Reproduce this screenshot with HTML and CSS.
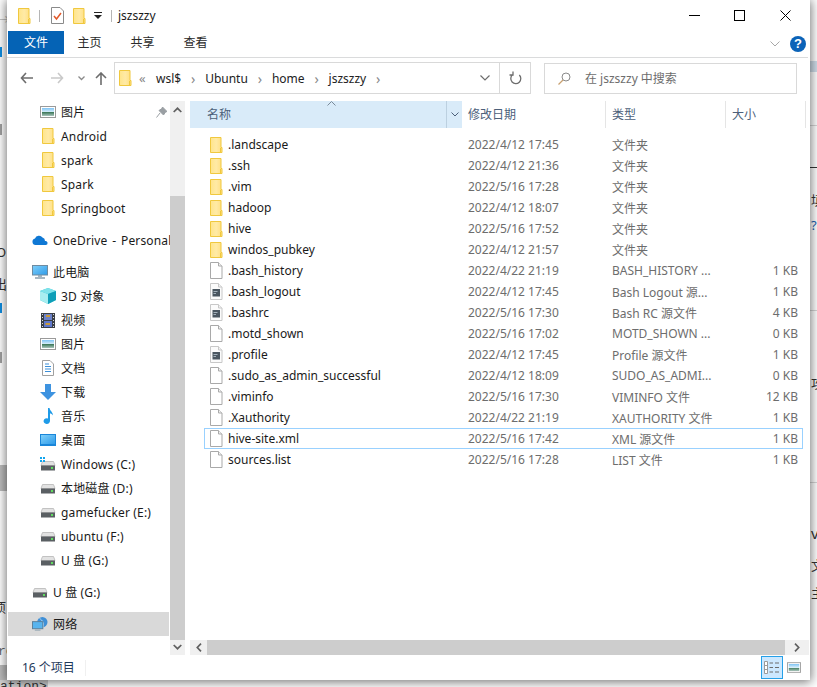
FILE: index.html
```html
<!DOCTYPE html>
<html lang="zh">
<head>
<meta charset="utf-8">
<title>jszszzy</title>
<link rel="stylesheet" href="styles.css">
</head>
<body>
<svg class="defs" width="0" height="0" aria-hidden="true">
  <defs>
    <linearGradient id="fg" x1="0" x2="1" y1="0" y2="0"><stop offset="0" stop-color="#ffe58a"/><stop offset=".5" stop-color="#ffeaa6"/><stop offset="1" stop-color="#ffdf80"/></linearGradient>
    <linearGradient id="sky" x1="0" x2="0" y1="0" y2="1"><stop offset="0" stop-color="#7fc4f5"/><stop offset=".5" stop-color="#d8edf8"/><stop offset=".55" stop-color="#3f7a5c"/><stop offset="1" stop-color="#a9c4bc"/></linearGradient>
    <linearGradient id="scr" x1="0" x2="1" y1="0" y2="1"><stop offset="0" stop-color="#7fd0fb"/><stop offset="1" stop-color="#2f9be8"/></linearGradient>
    <symbol id="folder" viewBox="0 0 13 16"><path d="M.5.5H11V10.500H12V15.500H.5Z" fill="url(#fg)" stroke="#f0c83e"/><path d="M10.500 11V15" stroke="#f0c83e" fill="none"/></symbol>
    <symbol id="file" viewBox="0 0 13 17"><path d="M.5.5H8.500L12 4V16.500H.5Z" fill="#fff" stroke="#a9a9a9"/><path d="M8.500.5V4H12" fill="#f1f1f1" stroke="#a9a9a9"/></symbol>
    <symbol id="script" viewBox="0 0 13 17"><path d="M.5.5H8.500L12 4V16.500H.5Z" fill="#fbfbfb" stroke="#c8c8c8"/><path d="M8.500.5V4H12" fill="#f1f1f1" stroke="#c8c8c8"/><rect x="2.500" y="6" width="7.500" height="7.500" fill="#4a5660"/><path d="M3.500 8.500H7.500M3.500 10.500H6" stroke="#a3b0ba"/></symbol>
    <symbol id="pic" viewBox="0 0 16 12"><rect x=".5" y=".5" width="15" height="11" fill="#fff" stroke="#9a9a9a"/><rect x="2" y="2" width="12" height="8" fill="url(#sky)"/></symbol>
    <symbol id="drive" viewBox="0 0 16 12"><path d="M2.500 2.500H13.500L15 6.500H1Z" fill="#e2e2e2" stroke="#c2c2c2"/><rect x="1" y="6.500" width="14" height="5" fill="#5a5f63"/><rect x="11" y="8" width="2" height="2" fill="#5fdc5f"/></symbol>
  </defs>
</svg>

<div class="backdrop">
  <span class="bit arrow">→</span>
  <span class="bit blue b1"></span>
  <span class="bit gray g1"></span>
  <span class="bit glyph o">O</span>
  <span class="bit glyph chu">出</span>
  <span class="bit blue b2"></span>
  <span class="bit gray g2"></span>
  <span class="bit block k1"></span>
  <span class="bit glyph xiang">项</span>
  <span class="bit glyph re">re</span>
  <span class="bit block k2"></span>
  <span class="bit tail">ation&gt;</span>
  <span class="bit rband"></span>
  <span class="bit rule r1"></span>
  <span class="bit rule r2"></span>
  <span class="bit rule r3"></span>
  <span class="bit rule r4"></span>
  <span class="bit glyph tian">填</span>
  <span class="bit glyph q">?</span>
  <span class="bit glyph gong">攻</span>
  <span class="bit glyph vi">vi</span>
  <span class="bit glyph wen">文</span>
  <span class="bit glyph zhu">主</span>
</div>

<main class="window">
  <header class="titlebar">
    <svg class="qa-folder" width="13" height="16"><use href="#folder"/></svg>
    <span class="qa-sep"></span>
    <svg class="qa-check" width="13" height="17" viewBox="0 0 13 17"><path d="M.5.5H9L12.500 4V16.500H.5Z" fill="#fff" stroke="#8a8a8a"/><path d="M3 9L5.500 12L10 6" fill="none" stroke="#e2592a" stroke-width="1.500"/></svg>
    <svg class="qa-folder2" width="13" height="16"><use href="#folder"/></svg>
    <svg class="qa-drop" width="8" height="7" viewBox="0 0 8 7"><path d="M0 0H8V1H0ZM0 3H8L4 7Z" fill="#222"/></svg>
    <span class="qa-sep sep2"></span>
    <span class="title">jszszzy</span>
    <svg class="ctl min" width="11" height="11" viewBox="0 0 11 11"><path d="M0 5.500H11" stroke="#000"/></svg>
    <svg class="ctl max" width="11" height="11" viewBox="0 0 11 11"><rect x=".5" y=".5" width="10" height="10" fill="none" stroke="#000"/></svg>
    <svg class="ctl cls" width="11" height="11" viewBox="0 0 11 11"><path d="M.5.5L10.500 10.500M10.500.5L.5 10.500" stroke="#000"/></svg>
  </header>

  <nav class="ribbon">
    <span class="tab tab-file">文件</span>
    <span class="tab tab-home">主页</span>
    <span class="tab">共享</span>
    <span class="tab">查看</span>
    <svg class="rb-chev" width="10" height="6" viewBox="0 0 10 6"><path d="M.5.5L5 5L9.500.5" fill="none" stroke="#a8a8a8"/></svg>
    <span class="help">?</span>
  </nav>

  <section class="toolbar">
    <svg class="tb back" width="13" height="12" viewBox="0 0 13 12"><path d="M6 1L1.500 6L6 11M2 6H13" fill="none" stroke="#6d6d6d" stroke-width="1.600"/></svg>
    <svg class="tb fwd" width="13" height="12" viewBox="0 0 13 12"><path d="M7 1L11.500 6L7 11M0 6H11" fill="none" stroke="#c9c9c9" stroke-width="1.600"/></svg>
    <svg class="tb dn" width="7" height="5" viewBox="0 0 7 5"><path d="M.5.5L3.500 3.500L6.500.5" fill="none" stroke="#8a8a8a" stroke-width="1.300"/></svg>
    <svg class="tb up" width="12" height="13" viewBox="0 0 12 13"><path d="M1 6L6 1L11 6M6 1.500V13" fill="none" stroke="#6d6d6d" stroke-width="1.600"/></svg>
    <div class="address">
      <svg class="ad-folder" width="13" height="16"><use href="#folder"/></svg>
      <span class="crumb-more">«</span>
      <span class="crumb c-wsl">wsl$</span><span class="crumb-sep">›</span>
      <span class="crumb">Ubuntu</span><span class="crumb-sep">›</span>
      <span class="crumb">home</span><span class="crumb-sep">›</span>
      <span class="crumb">jszszzy</span><span class="crumb-sep">›</span>
      <svg class="ad-chev" width="10" height="6" viewBox="0 0 10 6"><path d="M.5.5L5 5L9.500.5" fill="none" stroke="#6d6d6d" stroke-width="1.200"/></svg>
      <span class="refresh"><svg width="13" height="14" viewBox="0 0 13 14"><path d="M9.800 3.500A5 5 0 1 1 3 3.300M3.500 0V3.500H0" transform="translate(.5 .5)" fill="none" stroke="#6d6d6d" stroke-width="1.300"/></svg></span>
    </div>
    <div class="search">
      <svg width="13" height="13" viewBox="0 0 13 13"><circle cx="8" cy="5" r="4" fill="none" stroke="#8a8a8a"/><path d="M5 8L.5 12.500" stroke="#c8a070" stroke-width="1.200"/></svg>
      <span>在 jszszzy 中搜索</span>
    </div>
  </section>

  <div class="body">
    <aside class="sidebar">
      <ul class="tree">
        <li class="node sub"><svg class="ic" width="16" height="12"><use href="#pic"/></svg>图片
          <svg class="pin" width="11" height="11" viewBox="0 0 11 11"><path d="M6.500 0L11 4.500L9.500 5L7.500 8L3 3.500L6 1.500ZM4 6L.5 10.500" fill="#9a9fa3" stroke="#9a9fa3"/></svg></li>
        <li class="node sub"><svg class="ic" width="13" height="16"><use href="#folder"/></svg>Android</li>
        <li class="node sub"><svg class="ic" width="13" height="16"><use href="#folder"/></svg>spark</li>
        <li class="node sub"><svg class="ic" width="13" height="16"><use href="#folder"/></svg>Spark</li>
        <li class="node sub"><svg class="ic" width="13" height="16"><use href="#folder"/></svg>Springboot</li>
      </ul>
      <ul class="tree">
        <li class="node top"><svg class="ic" width="16" height="10" viewBox="0 0 16 10"><path d="M3.500 10A3.300 3.300 0 0 1 3 3.500A4.300 4.300 0 0 1 10.500 2.500A3.500 3.500 0 0 1 13 6A1.900 1.900 0 0 1 14 10Z" fill="#0f78d4"/></svg><span class="clip">OneDrive - Personal</span></li>
      </ul>
      <ul class="tree">
        <li class="node top"><svg class="ic" width="16" height="14" viewBox="0 0 16 14"><rect x=".5" y=".5" width="15" height="9.500" fill="url(#scr)" stroke="#6f8ba0"/><path d="M6 11H10M3 13H13" stroke="#8aa0ae" stroke-width="1.300"/></svg>此电脑</li>
        <li class="node sub"><svg class="ic" width="16" height="16" viewBox="0 0 16 16"><path d="M8 0L16 3V12L8 16L0 12V3Z" fill="#37c6d6"/><path d="M0 3L8 6V16L0 12Z" fill="#a8eef0"/><path d="M8 0L16 3L8 6L0 3Z" fill="#7fe3ea"/><path d="M8 6L16 3V12L8 16Z" fill="#0f9fb8"/></svg>3D 对象</li>
        <li class="node sub"><svg class="ic" width="14" height="15" viewBox="0 0 14 15"><rect width="14" height="15" fill="#3a3f45"/><rect x="3" y="1" width="8" height="6" fill="#6d83c9"/><rect x="3" y="8" width="8" height="6" fill="#5f78cc"/><path d="M5 3H9M4.500 11H9" stroke="#c99a3a" stroke-width="2"/><path d="M1 1.500H2M1 4.500H2M1 7.500H2M1 10.500H2M1 13.500H2M12 1.500H13M12 4.500H13M12 7.500H13M12 10.500H13M12 13.500H13" stroke="#ddd"/></svg>视频</li>
        <li class="node sub"><svg class="ic" width="16" height="12"><use href="#pic"/></svg>图片</li>
        <li class="node sub"><svg class="ic" width="12" height="16" viewBox="0 0 12 16"><path d="M.5.5H8L11.500 4V15.500H.5Z" fill="#fff" stroke="#a0a0a0"/><path d="M3 4H7M3 6.500H9M3 9H9M3 11.500H9" stroke="#3c8fd8"/></svg>文档</li>
        <li class="node sub"><svg class="ic" width="16" height="16" viewBox="0 0 16 16"><path d="M5 0H11V8H16L8 16L0 8H5Z" fill="#3e93e0"/></svg>下载</li>
        <li class="node sub"><svg class="ic" width="12" height="16" viewBox="0 0 12 16"><path d="M6 0H7.500C8 3 11 4 11 7.500C10 6 9 5.500 8 5.500V13A3.200 2.800 0 1 1 6 10.500Z" fill="#1f9be8"/></svg>音乐</li>
        <li class="node sub"><svg class="ic" width="16" height="12" viewBox="0 0 16 12"><rect width="16" height="12" fill="#1a86d9"/><rect x="1" y="1" width="14" height="9" fill="url(#scr)"/></svg>桌面</li>
        <li class="node sub"><svg class="ic" width="16" height="14" viewBox="0 0 16 14"><use href="#drive" y="2" height="12" width="16"/><path d="M0 0H2V2H0ZM3 0H5V2H3ZM0 3H2V5H0ZM3 3H5V5H3Z" fill="#12a5ee"/></svg>Windows (C:)</li>
        <li class="node sub"><svg class="ic" width="16" height="12"><use href="#drive"/></svg>本地磁盘 (D:)</li>
        <li class="node sub"><svg class="ic" width="16" height="12"><use href="#drive"/></svg>gamefucker (E:)</li>
        <li class="node sub"><svg class="ic" width="16" height="12"><use href="#drive"/></svg>ubuntu (F:)</li>
        <li class="node sub"><svg class="ic" width="16" height="12"><use href="#drive"/></svg>U 盘 (G:)</li>
      </ul>
      <ul class="tree">
        <li class="node top"><svg class="ic" width="16" height="12"><use href="#drive"/></svg>U 盘 (G:)</li>
      </ul>
      <ul class="tree">
        <li class="node top active"><svg class="ic" width="16" height="16" viewBox="0 0 17 16"><circle cx="11" cy="6" r="5.500" fill="#3f8fd6"/><path d="M8 2C11 4 13 7 12 11" stroke="#bfe0f5" fill="none"/><rect x=".5" y="5.500" width="11" height="7.500" fill="#58b4ee" stroke="#5b7f99"/><path d="M3 14.500H9" stroke="#8aa0ae"/></svg>网络</li>
      </ul>
    </aside>

    <div class="vscroll">
      <svg class="sb-up" width="9" height="6" viewBox="0 0 9 6"><path d="M.7 5L4.500 1.300L8.300 5" fill="none" stroke="#606060" stroke-width="1.700"/></svg>
      <span class="vthumb"></span>
      <svg class="sb-dn" width="9" height="6" viewBox="0 0 9 6"><path d="M.7 1L4.500 4.700L8.300 1" fill="none" stroke="#606060" stroke-width="1.700"/></svg>
    </div>

    <section class="pane">
      <div class="headers">
        <div class="hd hd-name">
          <span>名称</span>
          <svg class="sort" width="9" height="5" viewBox="0 0 9 5"><path d="M.5 4.500L4.500.5L8.500 4.500" fill="none" stroke="#7a8a99"/></svg>
          <span class="hd-drop"><svg width="8" height="5" viewBox="0 0 8 5"><path d="M.5.5L4 4L7.500.5" fill="none" stroke="#4c607a"/></svg></span>
        </div>
        <div class="hd hd-date">修改日期</div>
        <div class="hd hd-type">类型</div>
        <div class="hd hd-size">大小</div>
      </div>
      <div class="rows">
        <div class="row"><span class="name"><svg width="13" height="16"><use href="#folder"/></svg>.landscape</span><span class="cell">2022/4/12 17:45</span><span class="cell">文件夹</span><span class="size"></span></div>
        <div class="row"><span class="name"><svg width="13" height="16"><use href="#folder"/></svg>.ssh</span><span class="cell">2022/4/12 21:36</span><span class="cell">文件夹</span><span class="size"></span></div>
        <div class="row"><span class="name"><svg width="13" height="16"><use href="#folder"/></svg>.vim</span><span class="cell">2022/5/16 17:28</span><span class="cell">文件夹</span><span class="size"></span></div>
        <div class="row"><span class="name"><svg width="13" height="16"><use href="#folder"/></svg>hadoop</span><span class="cell">2022/4/12 18:07</span><span class="cell">文件夹</span><span class="size"></span></div>
        <div class="row"><span class="name"><svg width="13" height="16"><use href="#folder"/></svg>hive</span><span class="cell">2022/5/16 17:52</span><span class="cell">文件夹</span><span class="size"></span></div>
        <div class="row"><span class="name"><svg width="13" height="16"><use href="#folder"/></svg>windos_pubkey</span><span class="cell">2022/4/12 21:57</span><span class="cell">文件夹</span><span class="size"></span></div>
        <div class="row"><span class="name"><svg width="13" height="17"><use href="#file"/></svg>.bash_history</span><span class="cell">2022/4/22 21:19</span><span class="cell">BASH_HISTORY ...</span><span class="size">1 KB</span></div>
        <div class="row"><span class="name"><svg width="13" height="17"><use href="#script"/></svg>.bash_logout</span><span class="cell">2022/4/12 17:45</span><span class="cell">Bash Logout 源...</span><span class="size">1 KB</span></div>
        <div class="row"><span class="name"><svg width="13" height="17"><use href="#script"/></svg>.bashrc</span><span class="cell">2022/5/16 17:30</span><span class="cell">Bash RC 源文件</span><span class="size">4 KB</span></div>
        <div class="row"><span class="name"><svg width="13" height="17"><use href="#file"/></svg>.motd_shown</span><span class="cell">2022/5/16 17:02</span><span class="cell">MOTD_SHOWN ...</span><span class="size">0 KB</span></div>
        <div class="row"><span class="name"><svg width="13" height="17"><use href="#script"/></svg>.profile</span><span class="cell">2022/4/12 17:45</span><span class="cell">Profile 源文件</span><span class="size">1 KB</span></div>
        <div class="row"><span class="name"><svg width="13" height="17"><use href="#file"/></svg>.sudo_as_admin_successful</span><span class="cell">2022/4/12 18:09</span><span class="cell">SUDO_AS_ADMI...</span><span class="size">0 KB</span></div>
        <div class="row"><span class="name"><svg width="13" height="17"><use href="#file"/></svg>.viminfo</span><span class="cell">2022/5/16 17:30</span><span class="cell">VIMINFO 文件</span><span class="size">12 KB</span></div>
        <div class="row"><span class="name"><svg width="13" height="17"><use href="#file"/></svg>.Xauthority</span><span class="cell">2022/4/22 21:19</span><span class="cell">XAUTHORITY 文件</span><span class="size">1 KB</span></div>
        <div class="row focused"><span class="name"><svg width="13" height="17"><use href="#file"/></svg>hive-site.xml</span><span class="cell">2022/5/16 17:42</span><span class="cell">XML 源文件</span><span class="size">1 KB</span></div>
        <div class="row"><span class="name"><svg width="13" height="17"><use href="#file"/></svg>sources.list</span><span class="cell">2022/5/16 17:28</span><span class="cell">LIST 文件</span><span class="size">1 KB</span></div>
      </div>
      <div class="hscroll">
        <span class="hbtn"><svg width="6" height="9" viewBox="0 0 6 9"><path d="M5 .7L1.300 4.500L5 8.300" fill="none" stroke="#606060" stroke-width="1.700"/></svg></span>
        <span class="hthumb"></span>
        <span class="hbtn hbtn-r"><svg width="6" height="9" viewBox="0 0 6 9"><path d="M1 .7L4.700 4.500L1 8.300" fill="none" stroke="#606060" stroke-width="1.700"/></svg></span>
      </div>
    </section>
  </div>

  <footer class="status">
    <span class="count">16 个项目</span>
    <span class="view view-on"><svg width="16" height="13" viewBox="0 0 16 13"><path d="M.5.5H3.500V12.500H.5Z" fill="#fff" stroke="#9a9a9a"/><path d="M.5 4.500H3.500M.5 8.500H3.500" stroke="#9a9a9a"/><path d="M5.500 2H9M11 2H15M5.500 6.500H9M11 6.500H15M5.500 11H9M11 11H15" stroke="#6d6d6d"/></svg></span>
    <span class="view"><svg width="14" height="11" viewBox="0 0 14 11"><use href="#pic" width="14" height="11"/></svg></span>
  </footer>
</main>
</body>
</html>
```

FILE: styles.css
```css
* { box-sizing: border-box; }
html, body { margin: 0; height: 100%; }
body {
  position: relative;
  width: 817px;
  height: 687px;
  overflow: hidden;
  background: #fff;
  font-family: "Noto Sans", "Noto Sans CJK SC", sans-serif;
  font-size: 12px;
  color: #111;
}
.defs { position: absolute; }
ul { list-style: none; margin: 0; padding: 0; }
svg { display: block; flex: none; }

/* what shows behind the window */
.backdrop { position: absolute; inset: 0; }
.bit { position: absolute; }
.arrow { left: -4px; top: 8px; color: #c4c4c4; font-size: 14px; }
.blue { left: 0; width: 2px; height: 10px; background: #0f8de0; }
.b1 { top: 47px; }
.b2 { top: 303px; }
.gray { left: 0; width: 2px; height: 11px; background: #a0a0a0; }
.g1 { top: 124px; }
.g2 { top: 352px; }
.glyph { font-size: 13px; line-height: 16px; color: #333; }
.o { left: -4px; top: 244px; }
.chu { left: -6px; top: 276px; }
.xiang { left: -7px; top: 599px; }
.re { left: -2px; top: 644px; color: #666; font-family: "Liberation Mono", monospace; }
.block { left: 0; width: 10px; background: #bcbcbc; }
.k1 { top: 465px; height: 26px; }
.k2 { top: 665px; height: 16px; }
.tail { left: 0; top: 680px; padding-right: 1px; background: #d2d2d2; font: 13px/14px "Liberation Mono", monospace; color: #333; }
.rband { left: 808px; top: 61px; width: 9px; height: 11px; background: #cfdde9; }
.rule { left: 808px; width: 9px; height: 1px; background: #d6d6d6; }
.r1 { top: 125px; }
.r2 { top: 167px; background: #333; }
.r3 { top: 310px; }
.r4 { top: 482px; }
.tian { left: 811px; top: 192px; }
.q { left: 811px; top: 217px; color: #1c5fb0; }
.gong { left: 811px; top: 375px; }
.vi { left: 811px; top: 524px; font-size: 15px; line-height: 18px; }
.wen { left: 811px; top: 557px; }
.zhu { left: 811px; top: 585px; }

/* window */
.window {
  position: absolute;
  left: 7px;
  top: 0;
  width: 803px;
  height: 680px;
  display: flex;
  flex-direction: column;
  background: #fff;
  box-shadow: 0 1px 10px 1px rgba(0, 0, 0, .55);
}

.titlebar { height: 31px; display: flex; align-items: center; flex: none; }
.qa-folder { margin-left: 11px; }
.qa-sep { width: 1px; height: 12px; background: #b5b5b5; margin-left: 8px; }
.qa-check { margin-left: 11px; }
.qa-folder2 { margin-left: 9px; }
.qa-drop { margin-left: 8px; }
.sep2 { margin-left: 9px; }
.title { margin-left: 6px; color: #1a1a1a; }
.ctl { margin-left: 34px; }
.min { margin-left: auto; }
.max { margin-left: 34px; }
.cls { margin-left: 35px; margin-right: 19px; }

.ribbon {
  height: 27px;
  flex: none;
  display: flex;
  align-items: flex-start;
  border-bottom: 1px solid #dadbdc;
  margin-right: 2px;
}
.tab { height: 23px; line-height: 24px; width: 53px; text-align: center; color: #2a2a2a; }
.tab-file { width: 56px; margin-left: 1px; background: #0563b5; color: #fff; }
.tab-home { margin-left: -1px; }
.rb-chev { margin: 10px 0 0 auto; }
.help {
  width: 16px; height: 16px; margin: 5px 2px 0 10px;
  border-radius: 50%;
  background: #0b63b8;
  color: #fff;
  font: bold 13px/16px "Liberation Sans", sans-serif;
  text-align: center;
}

.toolbar { height: 43px; flex: none; display: flex; align-items: center; padding-bottom: 3px; }
.back { margin-left: 13px; }
.fwd { margin-left: 18px; }
.dn { margin-left: 14px; }
.up { margin-left: 10px; }
.address {
  width: 417px; height: 32px; margin-left: 7px;
  border: 1px solid #d9d9d9;
  display: flex; align-items: center;
  color: #222;
}
.ad-folder { margin-left: 4px; }
.crumb-more { margin-left: 7px; width: 9px; color: #888; font-size: 13px; }
.c-wsl { margin-left: 8px; }
.crumb-sep { width: 24px; text-align: center; color: #888; font-size: 14px; margin: 0; }
.ad-chev { margin-left: auto; }
.refresh {
  width: 31px; height: 100%; margin-left: 9px;
  border-left: 1px solid #d9d9d9;
  display: flex; align-items: center; justify-content: center;
}
.search {
  width: 253px; height: 31px; margin-left: 13px;
  border: 1px solid #d9d9d9;
  display: flex; align-items: center; gap: 14px;
  padding-left: 13px;
  color: #6d6d6d;
}

.body { flex: 1; min-height: 0; display: flex; }
.sidebar { width: 163px; flex: none; padding: 0 0 0 1px; overflow: hidden; }
.tree { padding-bottom: 8px; }
.tree:first-child { margin-top: -1px; }
.tree:last-child { padding-bottom: 0; }
.node {
  height: 24px;
  display: grid;
  grid-template-columns: 16px 1fr;
  column-gap: 5px;
  align-items: center;
  white-space: nowrap;
  position: relative;
  color: #1a1a1a;
  letter-spacing: .15px;
}
.node .ic { justify-self: center; }
.sub { padding-left: 32px; }
.top { padding-left: 24px; }
.clip { overflow: hidden; word-spacing: 1.5px; }
.active { background: #d9d9d9; margin-right: 1px; }
.pin { position: absolute; left: 148px; top: 7px; }

.vscroll {
  width: 15px; flex: none;
  background: #f0f0f0;
  display: flex; flex-direction: column; align-items: center;
}
.sb-up { margin-top: 6px; }
.vthumb { width: 100%; height: 444px; margin-top: 83px; background: #cdcdcd; }
.sb-dn { margin-top: 4px; }

.pane { width: 620px; margin-left: 5px; flex: none; display: flex; flex-direction: column; }
.headers { height: 27px; display: flex; color: #4c607a; flex: none; }
.hd { display: flex; align-items: center; border-right: 1px solid #e5e5e5; padding-left: 6px; padding-bottom: 2px; }
.hd-name {
  width: 272px; padding-left: 17px; padding-bottom: 0;
  background: #d9ebf9;
  border-right: 0;
  position: relative;
}
.hd-name > span:first-child { margin-bottom: 2px; }
.sort { position: absolute; left: 137px; top: 0; }
.hd-drop {
  margin-left: auto; width: 16px; height: 100%;
  border-left: 1px solid #bcd0e0;
  display: flex; align-items: center; justify-content: center;
}
.hd-date { width: 144px; }
.hd-type { width: 120px; }
.hd-size { width: 80px; }

.rows { flex: 1; padding: 6px 7px 0 14px; }
.row {
  height: 21px;
  display: grid;
  grid-template-columns: 263px 144px 1fr 50px;
  align-items: center;
  border: 1px solid transparent;
  padding-right: 4px;
  color: #6d6d6d;
  white-space: nowrap;
}
.focused { border-color: #99d1ff; }
.name { display: flex; align-items: center; gap: 5px; padding-left: 5px; color: #1a1a1a; }
.size { text-align: right; }

.hscroll { height: 15px; flex: none; display: flex; background: #f0f0f0; margin-right: 1px; }
.hbtn { width: 17px; display: flex; align-items: center; justify-content: center; }
.hbtn-r { width: 24px; }
.hthumb { flex: 1; background: #cdcdcd; }

.status { height: 25px; flex: none; display: flex; align-items: center; padding-left: 15px; }
.count { color: #1e395b; padding-right: 10px; border-right: 1px solid #f0f0f0; line-height: 16px; }
.view { width: 15px; height: 23px; display: flex; align-items: center; justify-content: center; margin-right: 9px; }
.view-on {
  width: 22px; margin-left: auto; margin-right: 3px;
  background: #cce8ff;
  border: 1px solid #26a0e8;
}
```
